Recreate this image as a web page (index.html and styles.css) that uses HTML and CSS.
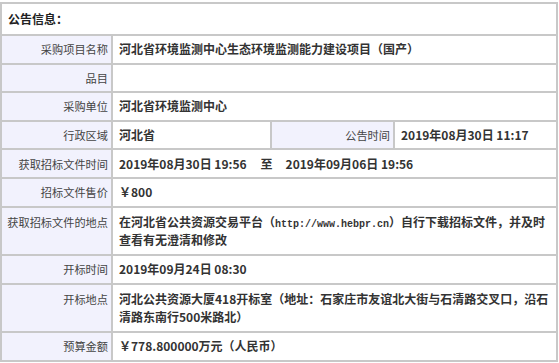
FILE: index.html
```html
<!DOCTYPE html>
<html lang="zh-CN">
<head>
<meta charset="utf-8">
<title>公告信息</title>
<link rel="stylesheet" href="styles.css">
</head>
<body>
<table class="info">
  <colgroup>
    <col class="c1"><col class="c2"><col class="c3"><col class="c4">
  </colgroup>
  <tr><td class="head" colspan="4">公告信息：</td></tr>
  <tr><td class="lbl">采购项目名称</td><td class="val" colspan="3">河北省环境监测中心生态环境监测能力建设项目（国产）</td></tr>
  <tr><td class="lbl">品目</td><td class="val" colspan="3"></td></tr>
  <tr><td class="lbl">采购单位</td><td class="val" colspan="3">河北省环境监测中心</td></tr>
  <tr><td class="lbl">行政区域</td><td class="val">河北省</td><td class="lbl">公告时间</td><td class="val">2019年08月30日 11:17</td></tr>
  <tr><td class="lbl">获取招标文件时间</td><td class="val" colspan="3">2019年08月30日 19:56<span class="to">至</span>2019年09月06日 19:56</td></tr>
  <tr><td class="lbl">招标文件售价</td><td class="val" colspan="3">￥800</td></tr>
  <tr><td class="lbl top">获取招标文件的地点</td><td class="val two" colspan="3">在河北省公共资源交易平台（<span class="mono">http://www.hebpr.cn</span>）自行下载招标文件，并及时查看有无澄清和修改</td></tr>
  <tr><td class="lbl">开标时间</td><td class="val" colspan="3">2019年09月24日 08:30</td></tr>
  <tr><td class="lbl top">开标地点</td><td class="val two" colspan="3">河北公共资源大厦418开标室（地址：石家庄市友谊北大街与石清路交叉口，沿石清路东南行500米路北）</td></tr>
  <tr><td class="lbl">预算金额</td><td class="val" colspan="3">￥778.800000万元（人民币）</td></tr>
</table>
</body>
</html>
```
FILE: styles.css
```css
html, body {
  margin: 0;
  padding: 0;
  background: #ffffff;
}
body {
  padding-top: 2px;
  font-family: "Noto Sans CJK SC", "Noto Sans", sans-serif;
  font-size: 12px;
  color: #333333;
}
.info {
  width: 558px;
  table-layout: fixed;
  border-collapse: separate;
  border-spacing: 0;
  border: 1px solid #c8c8c8;
}
.c1 { width: 111px; }
.c2 { width: 159px; }
.c3 { width: 123px; }
.info td {
  border: 1px solid #c8c8c8;
  padding: 4.3px 6px 4.3px 6px;
  line-height: 18px;
  vertical-align: middle;
  word-break: break-all;
}
.info td.head {
  padding: 5px 6px 5px 6px;
  line-height: 20px;
  font-weight: 700;
  color: #222222;
  background: #ffffff;
}
.info td.lbl {
  background: #f2f2fd;
  text-align: right;
  padding-left: 0;
  padding-right: 3px;
  color: #444444;
  font-weight: 400;
  font-size: 11.2px;
  white-space: nowrap;
}
.info td.lbl.top {
  vertical-align: top;
  padding-top: 5.5px;
}
.info td.val {
  font-weight: 700;
  color: #333333;
  background: #ffffff;
}
.info td.val.two {
  padding-top: 5.25px;
  padding-bottom: 5.25px;
}
.to {
  margin: 0 13px 0 14px;
}
.mono {
  font-family: "Liberation Mono", monospace;
  font-size: 10px;
  font-weight: 700;
  line-height: 1;
}
```
